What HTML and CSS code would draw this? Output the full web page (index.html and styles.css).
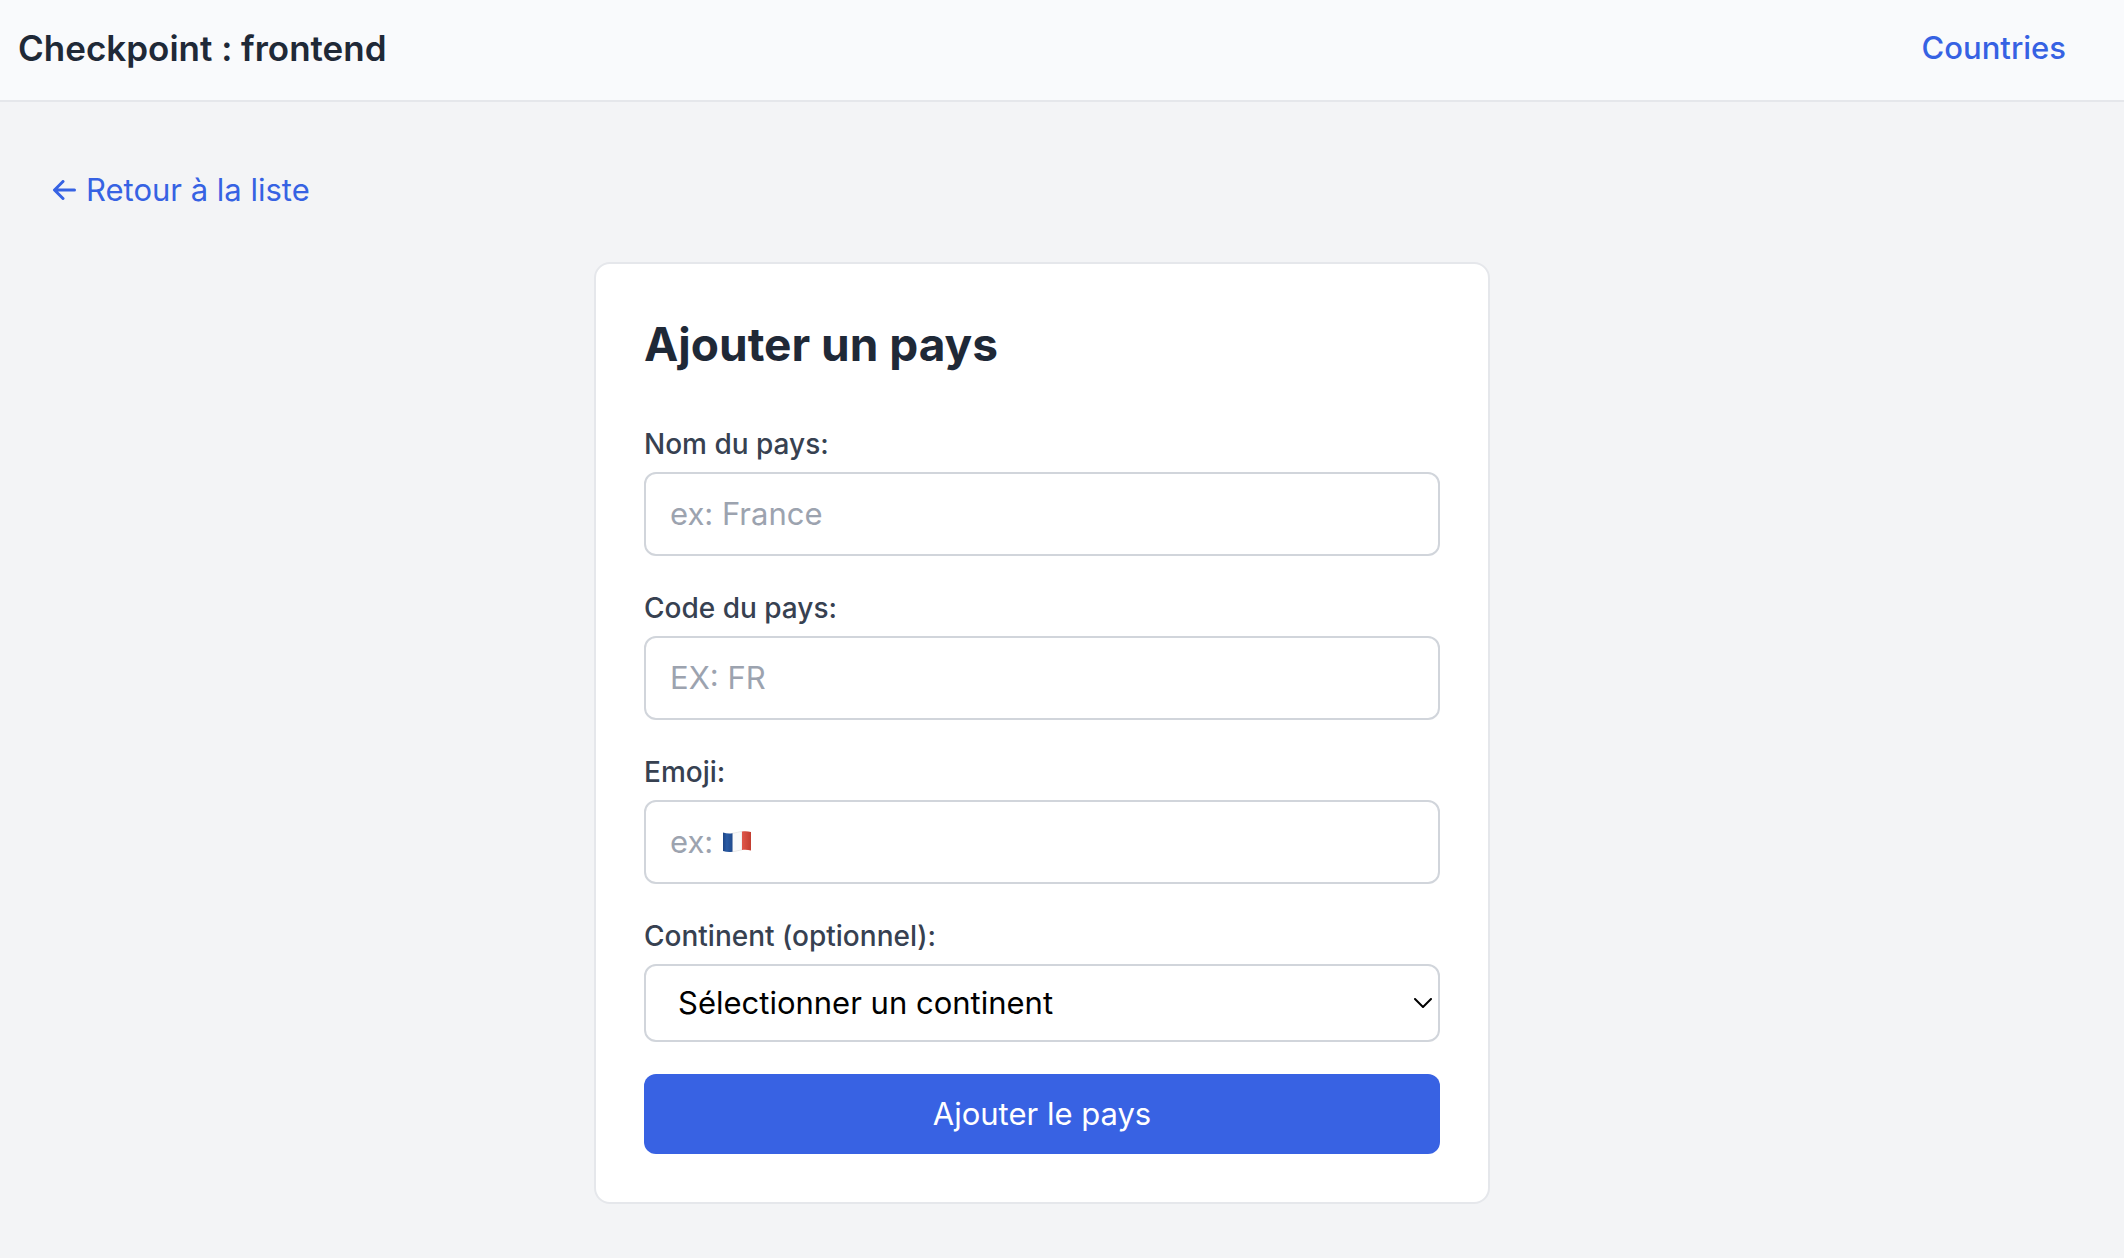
FILE: index.html
```html
<!DOCTYPE html>
<html lang="fr">
<head>
  <meta charset="utf-8">
  <meta name="viewport" content="width=device-width, initial-scale=1">
  <title>Checkpoint : frontend</title>
  <link rel="stylesheet" href="styles.css">
</head>
<body>
  <header class="site-header">
    <h1 class="site-title">Checkpoint : frontend</h1>
    <nav>
      <a class="nav-link" href="#countries">Countries</a>
    </nav>
  </header>

  <main class="page">
    <a class="back-link" href="#countries">
      <svg class="back-arrow" viewBox="0 0 24 20" aria-hidden="true">
        <path d="M11 1.500 2.500 10l8.500 8.500M3 10h19.500"/>
      </svg>
      Retour à la liste
    </a>

    <form class="card">
      <h2 class="card-title">Ajouter un pays</h2>

      <div class="fields">
        <div class="field">
          <label class="label" for="name">Nom du pays:</label>
          <input class="input" id="name" type="text" placeholder="ex: France">
        </div>

        <div class="field">
          <label class="label" for="code">Code du pays:</label>
          <input class="input" id="code" type="text" placeholder="EX: FR">
        </div>

        <div class="field">
          <label class="label" for="emoji">Emoji:</label>
          <div class="control">
            <input class="input" id="emoji" type="text" placeholder="ex:">
            <svg class="flag" viewBox="0 0 28 22" aria-hidden="true">
              <defs>
                <linearGradient id="blue" x1="0" x2="1">
                  <stop offset="0" stop-color="#1d4586"/>
                  <stop offset=".4" stop-color="#2a5ba4"/>
                  <stop offset="1" stop-color="#204a8c"/>
                </linearGradient>
                <linearGradient id="red" x1="0" x2="1">
                  <stop offset="0" stop-color="#e0574a"/>
                  <stop offset="1" stop-color="#c23d30"/>
                </linearGradient>
              </defs>
              <path fill="#fafafa" stroke="#d5d5d5" stroke-width=".5" d="M9 2.300c4-.4 7-1.500 10-1.900v18.500c-3 .3-6 1.500-10 1.800z"/>
              <path fill="url(#blue)" d="M0 1.500c3 .9 6 1.100 9.500.7v18.500c-3.500.4-6.500.2-9.500-.7z"/>
              <path fill="url(#red)" d="M19 .4c3-.5 6-.3 9 .6v18.500c-3-.9-6-1.100-9-.6z"/>
            </svg>
          </div>
        </div>

        <div class="field">
          <label class="label" for="continent">Continent (optionnel):</label>
          <div class="control">
            <select class="select" id="continent">
              <option>Sélectionner un continent</option>
            </select>
            <svg class="chevron" viewBox="0 0 18 10" aria-hidden="true">
              <path d="M1 1l8 8 8-8"/>
            </svg>
          </div>
        </div>

        <button class="submit" type="submit">Ajouter le pays</button>
      </div>
    </form>
  </main>
</body>
</html>
```
FILE: styles.css
```css
*,
*::before,
*::after {
  box-sizing: border-box;
}

body {
  margin: 0;
  min-height: 100vh;
  background: #f3f4f6;
  color: #1f2937;
  font-family: Inter, "Liberation Sans", sans-serif;
  font-size: 31px;
  line-height: 48px;
}

.site-header {
  display: flex;
  align-items: center;
  justify-content: space-between;
  padding: 20px 58px 24px 18px;
  border-bottom: 2px solid #e5e7eb;
  background: #f9fafc;
}

.site-title {
  margin: 0;
  font-size: 35px;
  font-weight: 600;
  line-height: 56px;
}

.nav-link {
  color: #3662e3;
  font-weight: 500;
  text-decoration: none;
}

.page {
  padding: 64px 92px 54px 52px;
}

.back-link {
  display: flex;
  align-items: center;
  gap: 10px;
  width: fit-content;
  color: #3662e3;
  text-decoration: none;
}

.back-arrow {
  width: 24px;
  height: 20px;
  fill: none;
  stroke: currentColor;
  stroke-width: 3;
  stroke-linecap: round;
  stroke-linejoin: round;
}

.card {
  max-width: 896px;
  margin: 48px auto 0;
  padding: 48px;
  border: 2px solid #e5e7eb;
  border-radius: 16px;
  background: #fff;
}

.card-title {
  margin: 0 0 48px;
  font-size: 46px;
  font-weight: 700;
  line-height: 64px;
}

.fields {
  display: flex;
  flex-direction: column;
  gap: 32px;
}

.field {
  display: flex;
  flex-direction: column;
  gap: 8px;
}

.label {
  color: #374151;
  font-size: 28px;
  font-weight: 500;
  line-height: 40px;
}

.control {
  position: relative;
}

.input,
.select {
  display: block;
  width: 100%;
  border: 2px solid #d1d5db;
  border-radius: 12px;
  background: #fff;
  font: inherit;
}

.input {
  padding: 16px 24px;
  color: #1f2937;
}

.input::placeholder {
  color: #9ca3af;
  opacity: 1;
}

.select {
  height: 78px;
  padding: 0 48px 0 32px;
  color: #000;
  appearance: none;
}

.flag {
  position: absolute;
  top: 31px;
  left: 79px;
  width: 28px;
  height: 22px;
  pointer-events: none;
}

.chevron {
  position: absolute;
  top: 34px;
  right: 8px;
  width: 18px;
  height: 10px;
  fill: none;
  stroke: #000;
  stroke-width: 2;
  stroke-linecap: round;
  stroke-linejoin: round;
  pointer-events: none;
}

.submit {
  padding: 16px 32px;
  border: 0;
  border-radius: 12px;
  background: #3862e3;
  color: #fff;
  font: inherit;
}
```
